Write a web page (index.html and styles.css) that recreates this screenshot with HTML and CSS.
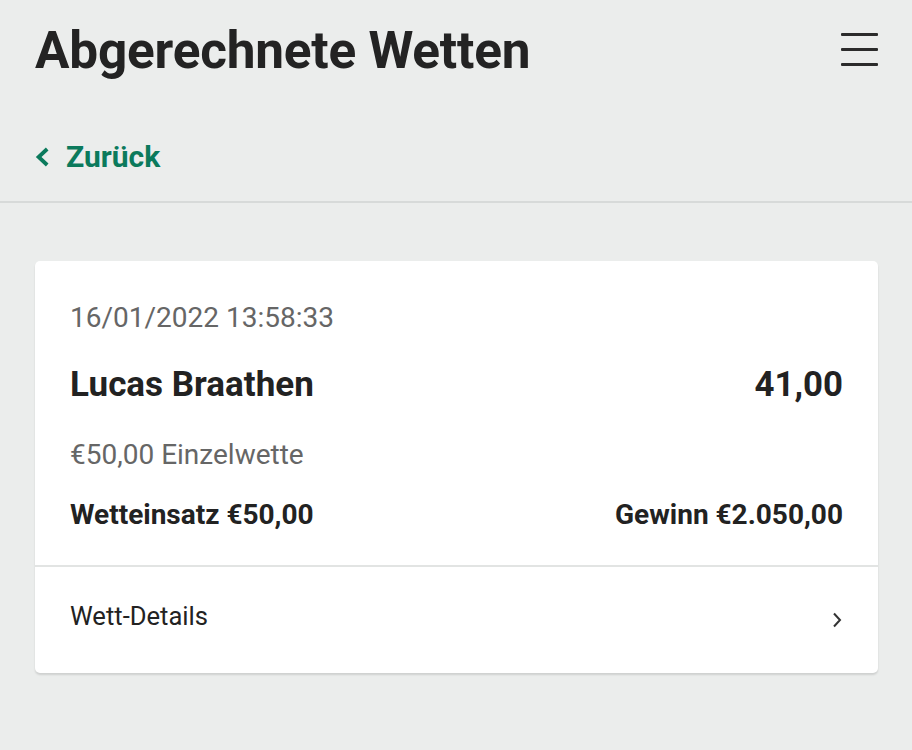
FILE: index.html
```html
<!DOCTYPE html>
<html lang="de">
<head>
<meta charset="utf-8">
<link rel="stylesheet" href="styles.css">
</head>
<body>
<header class="top">
  <h1 class="title">Abgerechnete Wetten</h1>
  <button class="menu" aria-label="Menü">
    <span></span><span></span><span></span>
  </button>
</header>
<nav class="back">
  <svg class="back-icon" width="14" height="20" viewBox="0 0 14 20"><path d="M12.2 2 L3.6 10 L12.2 18" fill="none" stroke="#0b7a5c" stroke-width="3.8"/></svg>
  <span>Zurück</span>
</nav>
<main class="content">
  <section class="card">
    <div class="card-body">
      <div class="date">16/01/2022 13:58:33</div>
      <div class="row main-row">
        <span class="name">Lucas Braathen</span>
        <span class="odds">41,00</span>
      </div>
      <div class="type">€50,00 Einzelwette</div>
      <div class="row sums">
        <span>Wetteinsatz €50,00</span>
        <span>Gewinn €2.050,00</span>
      </div>
    </div>
    <div class="details">
      <span>Wett-Details</span>
      <svg width="12" height="18" viewBox="0 0 12 18"><path d="M3 2.5 L9 9 L3 15.5" fill="none" stroke="#333" stroke-width="2"/></svg>
    </div>
  </section>
</main>
</body>
</html>
```

FILE: styles.css
```css
* { box-sizing: border-box; }
html, body { margin: 0; padding: 0; }
body {
  background: #ebedec;
  font-family: Roboto, "Liberation Sans", Arial, sans-serif;
  color: #222;
  width: 912px;
  height: 750px;
  overflow: hidden;
}
.top {
  display: flex;
  justify-content: space-between;
  align-items: center;
  padding: 17px 34px 0 35px;
  height: 84px;
}
.title {
  margin: 0;
  font-size: 51.3px;
  font-weight: 700;
  color: #232323;
  letter-spacing: -0.2px;
}
.menu {
  background: none;
  border: 0;
  padding: 0;
  width: 37px;
  display: flex;
  flex-direction: column;
  gap: 12px;
  margin-top: -2px;
}
.menu span {
  display: block;
  height: 3px;
  background: #2b2b2b;
  border-radius: 1px;
}
.back {
  display: flex;
  align-items: center;
  gap: 17px;
  padding: 28px 0 0 35px;
  height: 119px;
  border-bottom: 2px solid #d7dad9;
  color: #0b7a5c;
  font-size: 30px;
  font-weight: 700;
}
.back span { margin-top: -1px; }
.content {
  padding: 58px 34px 0 35px;
}
.card {
  background: #fff;
  border-radius: 5px;
  box-shadow: 0 2px 2px rgba(0,0,0,0.12);
}
.card-body {
  padding: 39px 35px 32px 35px;
  border-bottom: 2px solid #e2e4e3;
}
.row {
  display: flex;
  justify-content: space-between;
  align-items: baseline;
}
.date {
  font-size: 28px;
  color: #666;
  line-height: 36px;
}
.main-row {
  margin-top: 28px;
  line-height: 40px;
}
.name {
  font-size: 35px;
  font-weight: 700;
  color: #222;
}
.odds {
  font-size: 34.8px;
  font-weight: 700;
  color: #222;
}
.type {
  margin-top: 32px;
  font-size: 28px;
  color: #666;
  line-height: 36px;
}
.sums {
  margin-top: 24px;
  font-size: 28px;
  font-weight: 700;
  color: #222;
  line-height: 36px;
}
.details {
  display: flex;
  justify-content: space-between;
  align-items: center;
  height: 106px;
  padding: 0 35px 0 35px;
  font-size: 25.6px;
  color: #222;
}
.details span { margin-top: -8px; }
.details svg { margin-top: 0px; }
```
